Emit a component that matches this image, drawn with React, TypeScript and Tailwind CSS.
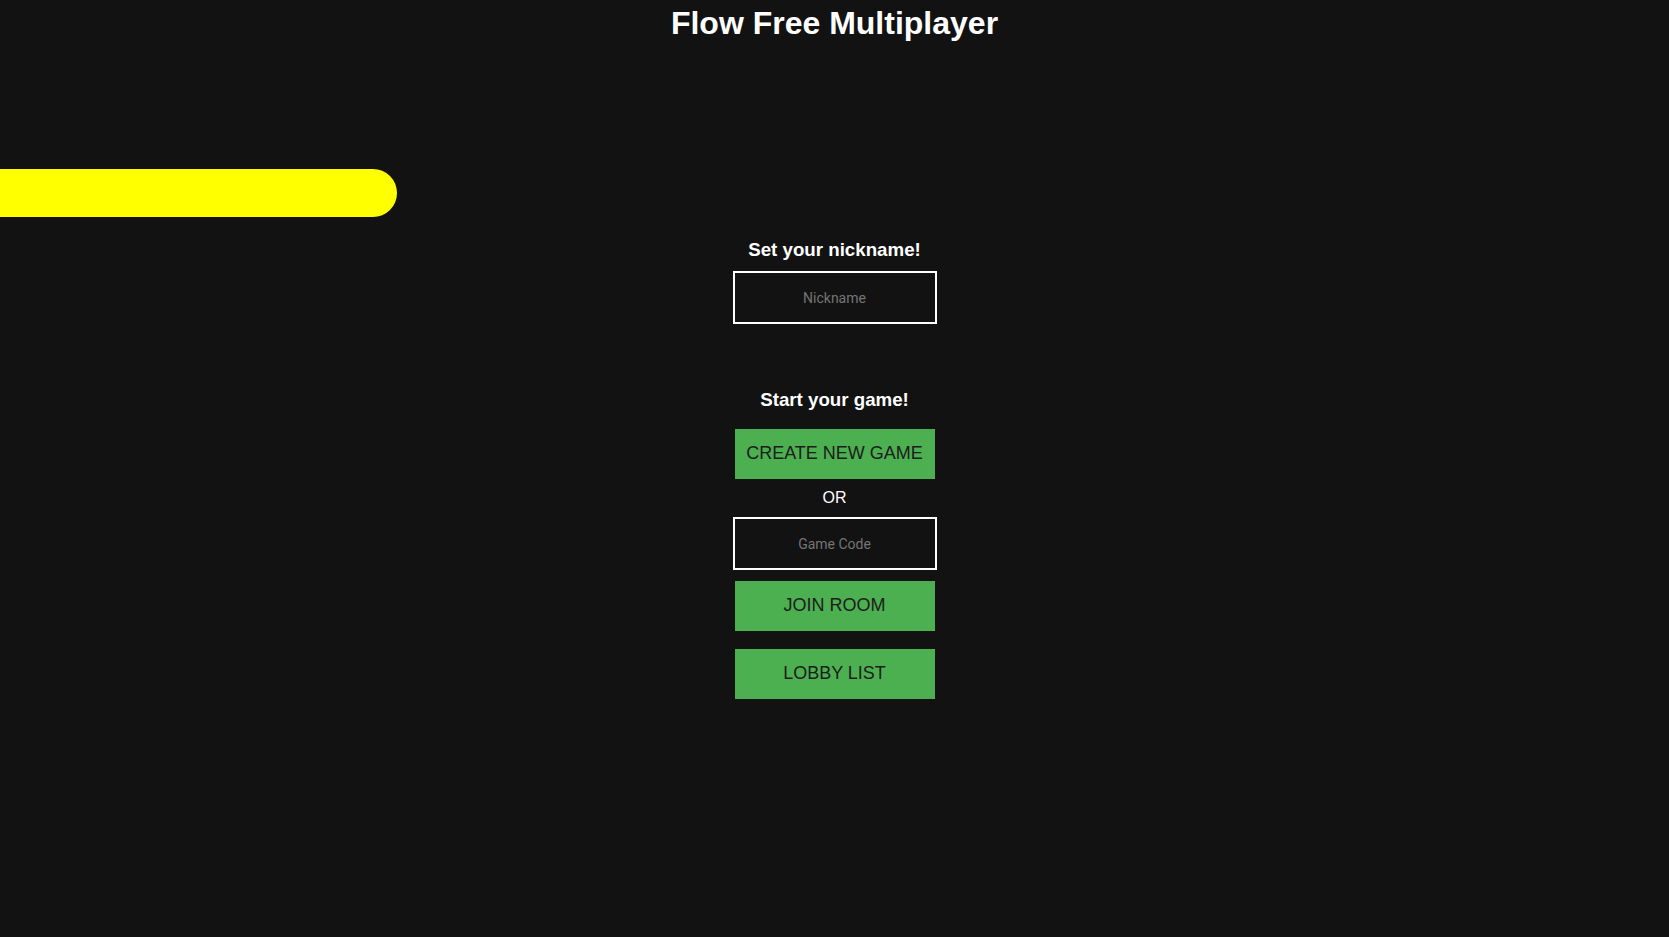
export default function App() {
  return (
    <div className="relative min-h-screen overflow-hidden bg-[#121212] font-['Liberation_Sans',Arial,sans-serif] text-white">
      <div className="absolute left-0 top-[169px] h-[48px] w-[397px] rounded-r-full bg-[#ffff00]" />

      <h1 className="relative pt-[5px] text-center text-[32px] font-bold leading-[37px]">
        Flow Free Multiplayer
      </h1>

      <main className="relative mt-[197px] flex flex-col items-center">
        <h3 className="text-[18.72px] font-bold leading-[22px]">Set your nickname!</h3>
        <input
          type="text"
          placeholder="Nickname"
          className="mt-[10px] h-[53px] w-[204px] border-2 border-white bg-transparent text-center font-['Roboto',sans-serif] text-[14px] text-white outline-none placeholder:text-[#757575]"
        />

        <h3 className="mt-[65px] text-[18.72px] font-bold leading-[22px]">Start your game!</h3>
        <button className="mt-[18px] h-[50px] w-[200px] bg-[#4caf50] pb-[2px] text-[18px] text-[#1d1d1d]">
          CREATE NEW GAME
        </button>
        <p className="mt-[10px] text-[16px] leading-[18px]">OR</p>
        <input
          type="text"
          placeholder="Game Code"
          className="mt-[10px] h-[53px] w-[204px] border-2 border-white bg-transparent text-center font-['Roboto',sans-serif] text-[14px] text-white outline-none placeholder:text-[#757575]"
        />
        <button className="mt-[11px] h-[50px] w-[200px] bg-[#4caf50] pb-[2px] text-[18px] text-[#1d1d1d]">
          JOIN ROOM
        </button>
        <button className="mt-[18px] h-[50px] w-[200px] bg-[#4caf50] pb-[2px] text-[18px] text-[#1d1d1d]">
          LOBBY LIST
        </button>
      </main>
    </div>
  );
}
